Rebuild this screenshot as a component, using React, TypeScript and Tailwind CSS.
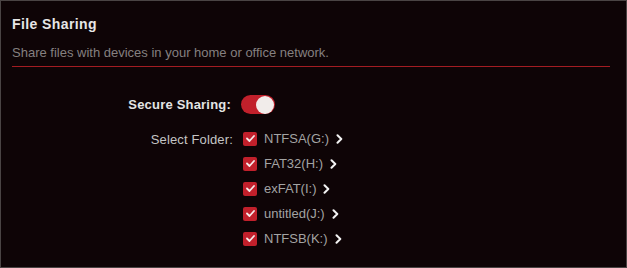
import React from 'react';

const folders = ['NTFSA(G:)', 'FAT32(H:)', 'exFAT(I:)', 'untitled(J:)', 'NTFSB(K:)'];

const Check: React.FC = () => (
  <span className="flex h-[14px] w-[14px] items-center justify-center rounded-[2px] bg-[#c1202b]">
    <svg width="9" height="7" viewBox="0 0 9 7" fill="none">
      <path d="M1 3.5 L3.5 6 L8 1" stroke="#f4eaea" strokeWidth="1.8" strokeLinecap="round" strokeLinejoin="round" />
    </svg>
  </span>
);

const Chevron: React.FC = () => (
  <svg width="7" height="10" viewBox="0 0 7 10" fill="none">
    <path d="M1.5 1.2 L5.3 5 L1.5 8.8" stroke="#f2f2f2" strokeWidth="2" strokeLinecap="round" strokeLinejoin="round" />
  </svg>
);

const App: React.FC = () => {
  return (
    <div
      className="h-[268px] w-[627px] border border-[#4a4444] bg-[#0e0406] px-[11px]"
      style={{ fontFamily: '"Liberation Sans", Arial, sans-serif' }}
    >
      <h1 className="pt-[15px] text-[14px] font-bold leading-[17px] tracking-[0.4px] text-[#e6e6e6]">File Sharing</h1>
      <p className="mt-[12px] text-[13px] leading-[15px] text-[#858080]">
        Share files with devices in your home or office network.
      </p>
      <div className="mt-[6px] mr-[5px] h-[1px] bg-[#a31c22]" />

      <div className="mt-[28px] flex flex-col">
        <div className="flex items-center">
          <span className="w-[220px] pr-[1px] text-right text-[13px] font-bold tracking-[0.2px] text-[#e4e4e4]">Secure Sharing:</span>
          <span className="ml-[9px] flex h-[19px] w-[34px] items-center justify-end rounded-full bg-[#c1202b] pr-[1px]">
            <span className="h-[18px] w-[18px] rounded-full bg-[#f1ecea]" />
          </span>
        </div>

        <div className="mt-[16px] flex items-start">
          <span className="w-[221px] pt-[1px] text-right text-[13px] leading-[16px] tracking-[0.15px] text-[#c4c4c4]">Select Folder:</span>
          <div className="ml-[10px] flex flex-col gap-[9px]">
            {folders.map((f) => (
              <div key={f} className="flex h-[16px] items-center">
                <Check />
                <span className="ml-[7px] text-[13px] leading-[16px] text-[#a3a3a3]">{f}</span>
                <span className="ml-[7px] flex items-center">
                  <Chevron />
                </span>
              </div>
            ))}
          </div>
        </div>
      </div>
    </div>
  );
};

export default App;
